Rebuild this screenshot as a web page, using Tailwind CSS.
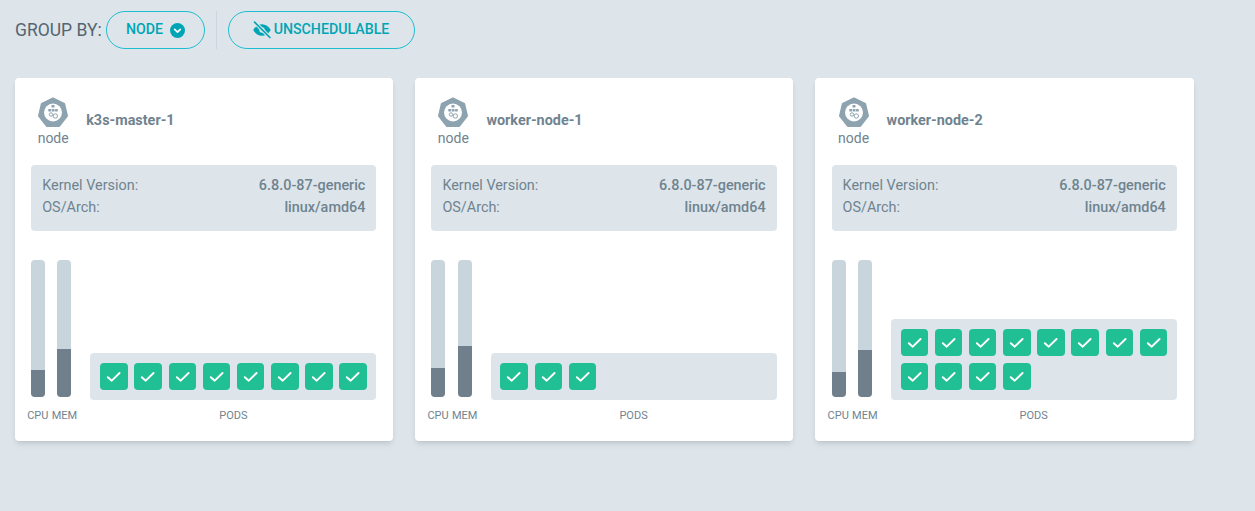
<!DOCTYPE html>
<html lang="en">
<head>
    <meta charset="UTF-8">
    <title>Nodes</title>
    <script src="https://cdn.jsdelivr.net/npm/@tailwindcss/browser@4"></script>
</head>
<body class="bg-[#dde5eb] font-['Roboto',sans-serif] min-h-screen overflow-hidden">
    <svg class="hidden">
        <symbol id="k8s" viewBox="0 0 32 32">
            <path d="M16 1.5 27.2 6.900 30 19 22.200 28.900H9.800L2 19 4.800 6.900Z" fill="#8da3af" stroke="#8da3af" stroke-width="2" stroke-linejoin="round"/>
            <circle cx="16" cy="15.500" r="9" fill="#fff"/>
            <g fill="#8da3af">
                <rect x="14.500" y="8" width="3" height="2.600" rx=".6"/>
                <rect x="11.300" y="12" width="2.800" height="2.600" rx=".6"/>
                <rect x="14.700" y="12" width="2.800" height="2.600" rx=".6"/>
                <rect x="18" y="12" width="2.800" height="2.600" rx=".6"/>
            </g>
            <g fill="none" stroke="#8da3af" stroke-width="1">
                <circle cx="14" cy="17.500" r="1.700"/>
                <circle cx="18.300" cy="19" r="2.200"/>
            </g>
        </symbol>
        <symbol id="check" viewBox="0 0 28 28">
            <path d="M8 14.500 12 18 20 10.200" fill="none" stroke="#fff" stroke-width="2" stroke-linecap="round" stroke-linejoin="round"/>
        </symbol>
    </svg>

    <!-- Toolbar -->
    <div class="flex items-center h-[38px] mt-[11px] ml-[15px]">
        <span class="w-[91px] text-[#56646f] text-[17.500px] whitespace-nowrap">GROUP BY:</span>
        <button class="flex items-center justify-center w-[99px] h-[38px] rounded-full border border-[#1fbdd0] text-[#00a5b5] text-[14.200px] font-medium">
            NODE
            <svg class="w-[15px] h-[15px] ml-[7px]" viewBox="0 0 16 16"><circle cx="8" cy="8" r="8" fill="#00a5b5"/><path d="M5 6.800 8 9.700 11 6.800" fill="none" stroke="#fff" stroke-width="1.800" stroke-linecap="round" stroke-linejoin="round"/></svg>
        </button>
        <div class="w-px h-[38px] bg-[#cdd6dd] mx-[11px]"></div>
        <button class="flex items-center justify-center w-[187px] h-[38px] pr-[2px] rounded-full border border-[#1fbdd0] text-[#00a5b5] text-[14.200px] font-medium">
            <svg class="w-[20px] h-[20px] mr-[2px]" viewBox="0 0 24 24" fill="none"><path d="M1.500 12C4 7.500 7.800 5 12 5s8 2.500 10.500 7c-2.500 4.500-6.300 7-10.500 7S4 16.500 1.500 12Z" fill="#00a5b5"/><circle cx="12" cy="12" r="3.200" fill="#dde5eb"/><path d="M3 2.500 21.500 21" stroke="#dde5eb" stroke-width="4.500"/><path d="M3 2.500 21.500 21" stroke="#00a5b5" stroke-width="2" stroke-linecap="round"/></svg>
            UNSCHEDULABLE
        </button>
    </div>

    <!-- Node cards -->
    <div class="flex gap-[22px] mt-[29px] ml-[15px]">
        <!-- k3s-master-1 -->
        <div class="w-[378.200px] h-[363px] bg-white rounded shadow-md pl-[16.200px] pr-[16.800px] shrink-0">
            <div class="flex h-[87px]">
                <div class="w-[44px] pt-[19px] flex flex-col items-center">
                    <svg class="w-[32px] h-[32px]"><use href="#k8s"/></svg>
                    <span class="text-[14px] leading-[16px] text-[#71838f] mt-[1px]">node</span>
                </div>
                <div class="ml-[11px] pt-[34px] text-[14.400px] leading-[18px] font-bold text-[#6f838f]">k3s-master-1</div>
            </div>
            <div class="h-[66px] bg-[#dde5eb] rounded-sm px-[11px] pt-[10px] text-[14.400px] leading-[22px] text-[#6f838f]">
                <div class="flex justify-between"><span>Kernel Version:</span><span class="font-medium">6.8.0-87-generic</span></div>
                <div class="flex justify-between"><span>OS/Arch:</span><span class="font-medium">linux/amd64</span></div>
            </div>
            <div class="flex mt-[29px]">
                <div class="w-[14px] h-[137px] bg-[#c9d5dc] rounded-sm flex items-end"><div class="w-full h-[27px] bg-[#6f7f8c] rounded-b-sm"></div></div>
                <div class="w-[14px] h-[137px] bg-[#c9d5dc] rounded-sm flex items-end ml-[12.200px]"><div class="w-full h-[48px] bg-[#6f7f8c] rounded-b-sm"></div></div>
                <div class="ml-[19px] w-[286px] h-[140px] flex flex-col justify-end">
                    <div class="bg-[#dde5eb] rounded-sm pl-[9.800px] pr-[8px] py-[10px] flex flex-wrap gap-x-[6.800px] gap-y-[6.500px]">
                        <svg class="w-[27.400px] h-[27.500px] bg-[#20bf94] rounded"><use href="#check"/></svg>
                        <svg class="w-[27.400px] h-[27.500px] bg-[#20bf94] rounded"><use href="#check"/></svg>
                        <svg class="w-[27.400px] h-[27.500px] bg-[#20bf94] rounded"><use href="#check"/></svg>
                        <svg class="w-[27.400px] h-[27.500px] bg-[#20bf94] rounded"><use href="#check"/></svg>
                        <svg class="w-[27.400px] h-[27.500px] bg-[#20bf94] rounded"><use href="#check"/></svg>
                        <svg class="w-[27.400px] h-[27.500px] bg-[#20bf94] rounded"><use href="#check"/></svg>
                        <svg class="w-[27.400px] h-[27.500px] bg-[#20bf94] rounded"><use href="#check"/></svg>
                        <svg class="w-[27.400px] h-[27.500px] bg-[#20bf94] rounded"><use href="#check"/></svg>
                    </div>
                </div>
            </div>
            <div class="flex mt-[9px] text-[11px] leading-[14px] text-[#71838f]">
                <div class="w-[50px] -ml-[4px] flex justify-between whitespace-nowrap"><span>CPU</span><span>MEM</span></div>
                <div class="ml-[13.200px] w-[286px] text-center">PODS</div>
            </div>
        </div>

        <!-- worker-node-1 -->
        <div class="w-[378.200px] h-[363px] bg-white rounded shadow-md pl-[16.200px] pr-[16.800px] shrink-0">
            <div class="flex h-[87px]">
                <div class="w-[44px] pt-[19px] flex flex-col items-center">
                    <svg class="w-[32px] h-[32px]"><use href="#k8s"/></svg>
                    <span class="text-[14px] leading-[16px] text-[#71838f] mt-[1px]">node</span>
                </div>
                <div class="ml-[11px] pt-[34px] text-[14.400px] leading-[18px] font-bold text-[#6f838f]">worker-node-1</div>
            </div>
            <div class="h-[66px] bg-[#dde5eb] rounded-sm px-[11px] pt-[10px] text-[14.400px] leading-[22px] text-[#6f838f]">
                <div class="flex justify-between"><span>Kernel Version:</span><span class="font-medium">6.8.0-87-generic</span></div>
                <div class="flex justify-between"><span>OS/Arch:</span><span class="font-medium">linux/amd64</span></div>
            </div>
            <div class="flex mt-[29px]">
                <div class="w-[14px] h-[137px] bg-[#c9d5dc] rounded-sm flex items-end"><div class="w-full h-[29px] bg-[#6f7f8c] rounded-b-sm"></div></div>
                <div class="w-[14px] h-[137px] bg-[#c9d5dc] rounded-sm flex items-end ml-[12.200px]"><div class="w-full h-[51px] bg-[#6f7f8c] rounded-b-sm"></div></div>
                <div class="ml-[19px] w-[286px] h-[140px] flex flex-col justify-end">
                    <div class="bg-[#dde5eb] rounded-sm pl-[9.800px] pr-[8px] py-[10px] flex flex-wrap gap-x-[6.800px] gap-y-[6.500px]">
                        <svg class="w-[27.400px] h-[27.500px] bg-[#20bf94] rounded"><use href="#check"/></svg>
                        <svg class="w-[27.400px] h-[27.500px] bg-[#20bf94] rounded"><use href="#check"/></svg>
                        <svg class="w-[27.400px] h-[27.500px] bg-[#20bf94] rounded"><use href="#check"/></svg>
                    </div>
                </div>
            </div>
            <div class="flex mt-[9px] text-[11px] leading-[14px] text-[#71838f]">
                <div class="w-[50px] -ml-[4px] flex justify-between whitespace-nowrap"><span>CPU</span><span>MEM</span></div>
                <div class="ml-[13.200px] w-[286px] text-center">PODS</div>
            </div>
        </div>

        <!-- worker-node-2 -->
        <div class="w-[378.200px] h-[363px] bg-white rounded shadow-md pl-[16.200px] pr-[16.800px] shrink-0">
            <div class="flex h-[87px]">
                <div class="w-[44px] pt-[19px] flex flex-col items-center">
                    <svg class="w-[32px] h-[32px]"><use href="#k8s"/></svg>
                    <span class="text-[14px] leading-[16px] text-[#71838f] mt-[1px]">node</span>
                </div>
                <div class="ml-[11px] pt-[34px] text-[14.400px] leading-[18px] font-bold text-[#6f838f]">worker-node-2</div>
            </div>
            <div class="h-[66px] bg-[#dde5eb] rounded-sm px-[11px] pt-[10px] text-[14.400px] leading-[22px] text-[#6f838f]">
                <div class="flex justify-between"><span>Kernel Version:</span><span class="font-medium">6.8.0-87-generic</span></div>
                <div class="flex justify-between"><span>OS/Arch:</span><span class="font-medium">linux/amd64</span></div>
            </div>
            <div class="flex mt-[29px]">
                <div class="w-[14px] h-[137px] bg-[#c9d5dc] rounded-sm flex items-end"><div class="w-full h-[25px] bg-[#6f7f8c] rounded-b-sm"></div></div>
                <div class="w-[14px] h-[137px] bg-[#c9d5dc] rounded-sm flex items-end ml-[12.200px]"><div class="w-full h-[47px] bg-[#6f7f8c] rounded-b-sm"></div></div>
                <div class="ml-[19px] w-[286px] h-[140px] flex flex-col justify-end">
                    <div class="bg-[#dde5eb] rounded-sm pl-[9.800px] pr-[8px] py-[10px] flex flex-wrap gap-x-[6.800px] gap-y-[6.500px]">
                        <svg class="w-[27.400px] h-[27.500px] bg-[#20bf94] rounded"><use href="#check"/></svg>
                        <svg class="w-[27.400px] h-[27.500px] bg-[#20bf94] rounded"><use href="#check"/></svg>
                        <svg class="w-[27.400px] h-[27.500px] bg-[#20bf94] rounded"><use href="#check"/></svg>
                        <svg class="w-[27.400px] h-[27.500px] bg-[#20bf94] rounded"><use href="#check"/></svg>
                        <svg class="w-[27.400px] h-[27.500px] bg-[#20bf94] rounded"><use href="#check"/></svg>
                        <svg class="w-[27.400px] h-[27.500px] bg-[#20bf94] rounded"><use href="#check"/></svg>
                        <svg class="w-[27.400px] h-[27.500px] bg-[#20bf94] rounded"><use href="#check"/></svg>
                        <svg class="w-[27.400px] h-[27.500px] bg-[#20bf94] rounded"><use href="#check"/></svg>
                        <svg class="w-[27.400px] h-[27.500px] bg-[#20bf94] rounded"><use href="#check"/></svg>
                        <svg class="w-[27.400px] h-[27.500px] bg-[#20bf94] rounded"><use href="#check"/></svg>
                        <svg class="w-[27.400px] h-[27.500px] bg-[#20bf94] rounded"><use href="#check"/></svg>
                        <svg class="w-[27.400px] h-[27.500px] bg-[#20bf94] rounded"><use href="#check"/></svg>
                    </div>
                </div>
            </div>
            <div class="flex mt-[9px] text-[11px] leading-[14px] text-[#71838f]">
                <div class="w-[50px] -ml-[4px] flex justify-between whitespace-nowrap"><span>CPU</span><span>MEM</span></div>
                <div class="ml-[13.200px] w-[286px] text-center">PODS</div>
            </div>
        </div>
    </div>
</body>
</html>
